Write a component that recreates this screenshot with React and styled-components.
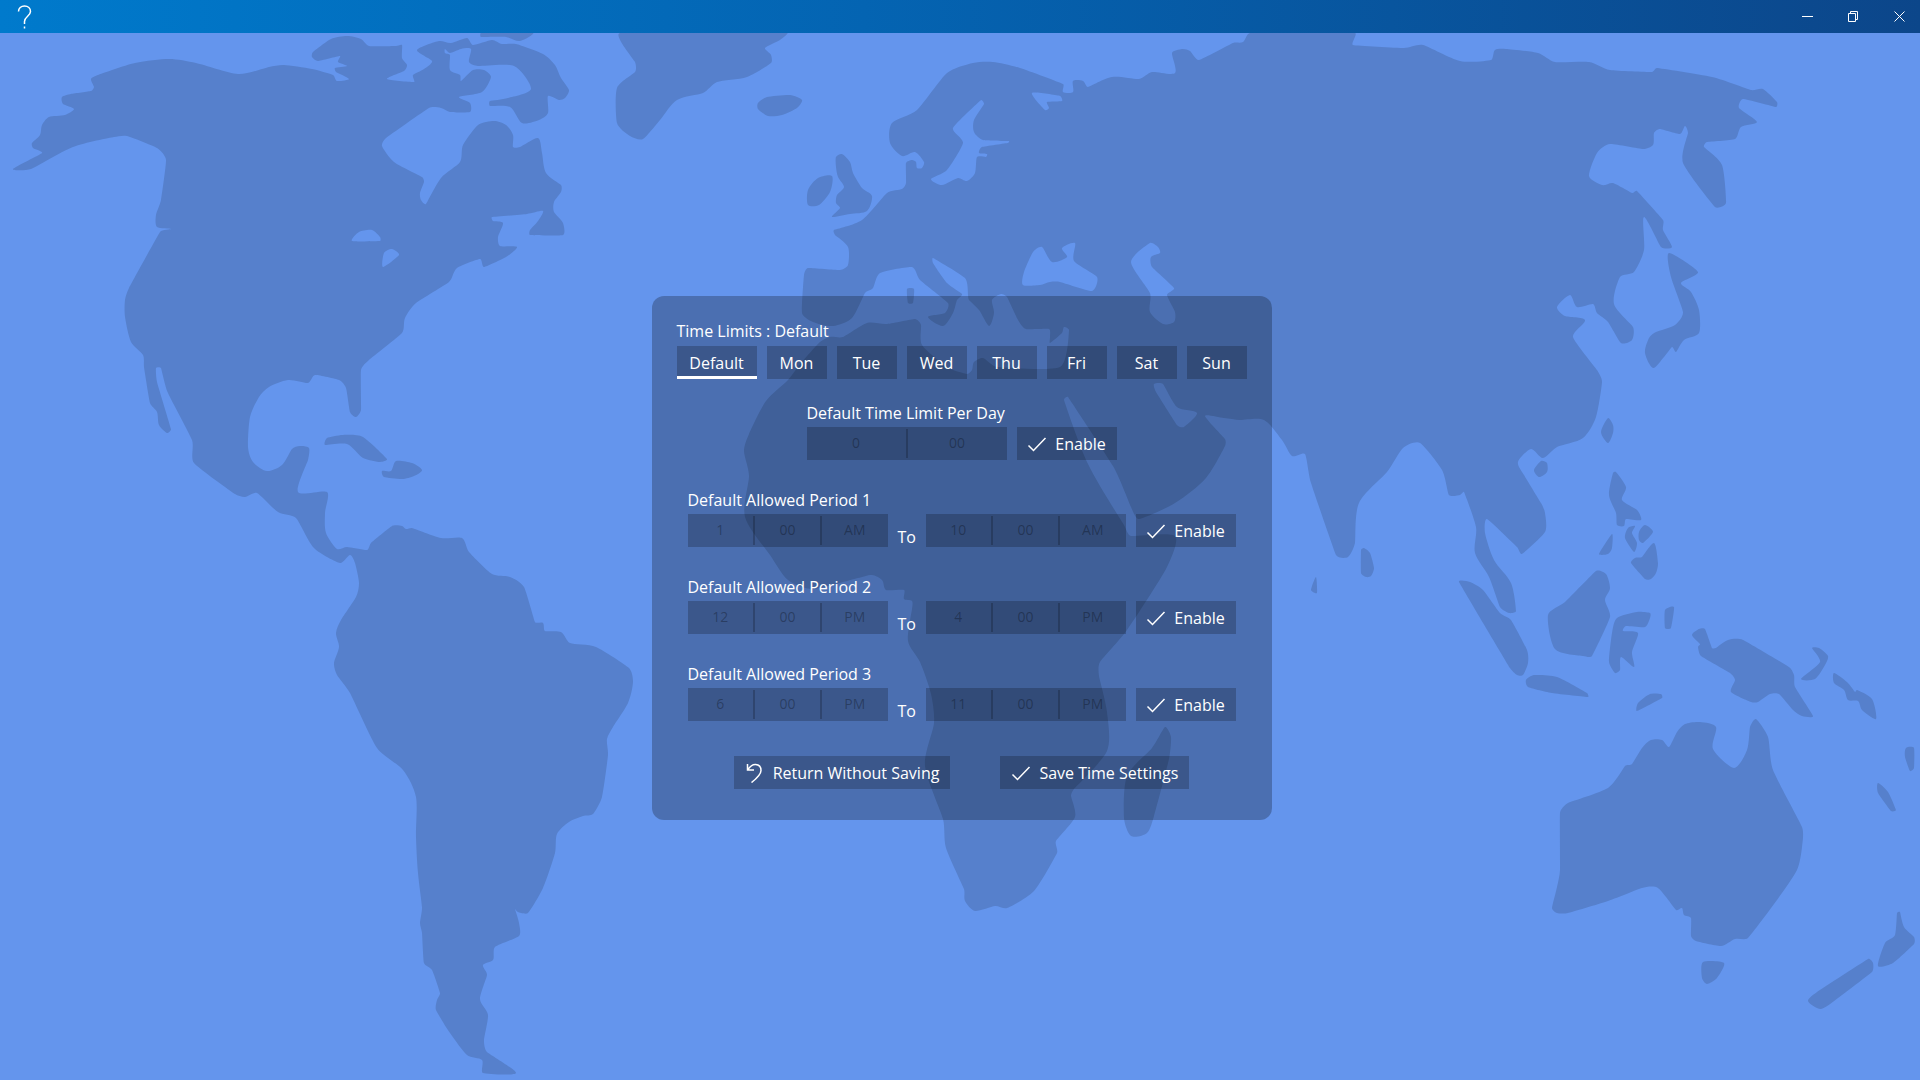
import React, { useState } from 'react';
import styled, { css, createGlobalStyle } from 'styled-components';

const GlobalStyle = createGlobalStyle`
  * {
    box-sizing: border-box;
  }
  body {
    margin: 0;
    background: #6495ed;
    color: #fff;
    font-family: "Open Sans", "Noto Sans", sans-serif;
    font-size: 16px;
    line-height: 24px;
  }
`

// Outlines of the world map, one "x,y x,y ..." list for each coast line.
const land = [
  // the Americas
  '13,169 42,153 33,148 32,143 40,135 42,125 49,117 65,115 74,109 63,104 62,97 71,94 91,91 94,87 91,79 98,75 135,63 169,59 196,63 238,74 269,67 284,65 312,69 333,75 337,81 349,79 336,72 335,68 347,66 338,62 340,56 318,61 312,57 313,52 331,39 347,36 361,39 369,46 396,46 402,45 402,58 407,65 404,71 387,79 414,82 413,75 424,69 432,61 417,50 439,41 451,43 467,38 473,45 492,40 502,44 516,44 543,54 555,65 561,78 569,90 565,98 559,100 548,96 548,113 539,120 522,123 510,107 490,106 490,101 508,98 531,89 514,66 478,66 469,62 471,49 461,49 450,53 445,49 445,53 450,55 450,70 460,75 461,81 473,70 484,70 491,77 482,92 459,97 470,103 470,112 450,112 441,108 429,108 386,138 382,146 394,162 422,177 424,182 420,193 421,200 426,204 441,178 460,162 463,145 478,125 494,121 506,125 513,135 513,147 520,147 538,138 542,153 546,173 561,185 561,192 554,202 554,212 563,223 563,235 530,235 530,230 538,221 543,211 527,214 492,217 493,221 503,223 498,237 500,246 517,247 506,257 484,267 480,259 457,268 449,282 416,303 405,318 402,333 369,360 361,370 361,410 356,417 350,412 346,388 339,380 315,375 308,383 288,380 269,387 259,397 250,417 248,447 253,462 267,471 282,465 292,449 300,446 309,448 308,460 298,492 327,492 325,513 326,533 337,549 347,547 367,550 371,543 392,526 402,526 406,529 412,528 441,538 462,538 469,552 492,574 510,577 524,587 535,622 543,623 545,631 561,632 570,643 596,647 629,668 633,682 628,703 613,727 607,739 608,755 602,797 593,814 583,816 569,822 557,834 555,853 543,888 528,913 518,912 515,909 519,923 519,936 495,947 493,960 483,965 487,975 480,999 488,1015 484,1040 487,1052 516,1073 483,1073 482,1060 467,1055 450,1033 436,1010 437,1000 440,993 432,970 424,963 422,933 420,923 422,907 418,873 416,837 416,797 403,770 377,748 350,693 337,675 334,663 339,647 336,633 341,620 356,597 359,583 355,563 350,555 340,563 314,548 296,518 278,512 257,493 245,497 235,494 194,463 192,440 168,393 161,368 156,368 157,382 171,429 167,433 159,425 157,412 150,403 144,367 143,355 131,342 125,317 125,300 129,288 160,232 171,229 157,227 156,215 161,200 166,160 157,148 127,136 114,137 73,147 31,169',
  '481,33 481,37 506,37 520,41 533,33',
  '325,445 327,438 343,435 363,437 387,459 380,462 363,458 347,444',
  '382,471 391,471 396,461 412,463 422,470 414,476 402,479 384,477',
  // Greenland, Iceland, British Isles
  '620,33 635,62 635,72 617,88 617,123 630,136 643,139 660,120 677,100 703,93 717,82 747,77 771,63 771,55 765,48 780,40 787,33',
  '758,103 767,97 790,95 802,100 797,108 782,115 768,116 758,109',
  '842,154 850,162 853,173 862,188 872,196 867,211 850,214 832,217 840,208 836,203 837,195 844,187 838,177 836,167 836,157',
  '808,205 808,190 818,178 832,176 830,192 819,205',
  // Eurasia and Africa
  '834,230 862,220 887,193 902,189 906,183 906,163 912,160 916,162 917,168 922,168 924,162 915,152 902,156 890,143 892,123 917,110 947,73 973,63 993,62 1020,68 1063,84 1063,92 1073,92 1073,81 1083,81 1088,87 1112,77 1139,79 1152,72 1175,73 1172,53 1182,49 1190,51 1199,60 1233,43 1243,42 1250,33 1355,33 1353,45 1404,48 1423,45 1460,61 1491,60 1495,50 1506,49 1538,53 1555,62 1589,62 1610,70 1652,72 1657,68 1712,77 1751,90 1763,89 1777,102 1776,107 1743,99 1739,108 1757,122 1741,127 1735,139 1707,142 1704,147 1722,165 1726,203 1715,207 1683,163 1688,133 1685,126 1680,134 1660,129 1654,133 1653,145 1643,149 1610,144 1597,153 1589,176 1602,185 1613,183 1632,193 1637,191 1663,220 1663,230 1672,247 1661,247 1644,217 1644,250 1634,272 1620,277 1614,304 1633,327 1632,340 1621,343 1608,322 1597,313 1593,304 1577,307 1570,295 1557,307 1565,316 1585,320 1573,337 1597,370 1602,382 1596,417 1583,438 1557,447 1543,458 1531,449 1518,462 1524,475 1541,503 1545,513 1545,532 1522,554 1517,547 1487,519 1485,533 1494,560 1511,583 1516,611 1509,613 1500,607 1489,577 1475,553 1476,527 1464,492 1460,495 1449,495 1442,470 1420,443 1403,448 1387,472 1359,503 1355,543 1348,557 1336,555 1311,483 1305,454 1292,456 1282,440 1264,420 1240,420 1224,418 1205,416 1225,439 1225,446 1206,478 1175,503 1139,519 1131,507 1113,466 1068,397 1064,400 1088,464 1124,525 1131,536 1175,536 1166,569 1127,630 1100,662 1099,676 1107,712 1107,751 1074,789 1071,796 1075,817 1056,841 1057,853 1034,891 1007,908 995,906 975,911 965,901 964,889 946,848 943,819 925,766 934,723 931,694 920,662 908,641 912,609 912,601 904,599 904,590 886,590 882,580 872,575 858,578 813,589 788,580 770,555 745,517 749,476 744,451 749,434 766,401 788,380 801,363 820,342 830,337 843,337 867,323 887,324 915,319 921,325 922,345 947,367 967,374 972,370 974,362 983,358 997,367 1060,367 1069,330 1064,327 1062,333 1050,343 1050,337 1049,329 1026,329 1018,320 1007,297 1001,294 992,300 994,313 989,326 979,310 969,300 968,295 965,278 933,258 933,263 947,283 962,294 957,300 953,313 943,326 928,317 945,313 948,303 920,280 912,267 880,273 873,288 865,293 852,318 833,326 813,322 802,313 804,275 808,268 840,270 848,265 848,247 835,235',
  '907,289 914,289 913,303 908,303',
  '1165,727 1171,737 1169,759 1154,816 1147,833 1131,836 1124,818 1127,776 1152,748',
  // Japan, Taiwan, Hainan, Philippines
  '1669,253 1698,272 1681,283 1691,292 1699,310 1699,333 1684,340 1676,352 1672,347 1664,357 1653,368 1645,353 1649,338 1656,332 1675,325 1683,312 1671,277',
  '1608,418 1613,425 1613,433 1608,443 1601,432',
  '1541,461 1547,463 1547,472 1539,477 1534,470',
  '1616,472 1626,487 1622,500 1637,510 1641,520 1626,519 1624,526 1617,525 1616,513 1609,495 1613,473',
  '1635,526 1632,533 1637,543 1634,552 1625,538 1628,528',
  '1645,525 1653,532 1643,543 1639,540 1639,532',
  '1654,543 1658,563 1656,573 1651,579 1645,579 1631,563 1635,558 1642,557',
  '1612,534 1612,548 1608,554 1599,554',
  // Sri Lanka, Maldives, Indonesia
  '1364,548 1370,553 1374,568 1371,576 1366,577 1361,573 1361,550',
  '1316,577 1317,593 1311,590',
  '1459,582 1470,582 1483,590 1500,613 1511,620 1527,650 1528,663 1523,675 1517,675 1510,668',
  '1526,680 1534,675 1557,677 1587,693 1588,697 1552,693 1528,687',
  '1596,571 1606,574 1610,588 1605,600 1610,617 1592,656 1583,656 1555,649 1548,615 1565,602',
  '1650,613 1650,618 1645,627 1626,626 1623,631 1638,633 1632,652 1634,667 1621,657 1620,670 1615,673 1609,662 1612,633 1617,618 1637,612',
  '1674,607 1671,628 1665,628 1665,610',
  '1637,711 1638,703 1650,694 1661,694 1662,698',
  // New Guinea, Oceania
  '1692,635 1699,629 1705,629 1712,648 1716,648 1728,640 1743,640 1789,667 1794,675 1795,687 1813,716 1802,716 1793,710 1779,694 1770,694 1758,702 1751,702 1731,692 1735,680 1730,673 1701,656 1698,647 1700,644',
  '1812,648 1819,648 1828,656 1825,665 1815,679 1801,679 1820,662',
  '1834,673 1847,682 1855,692 1857,690 1872,699 1876,719 1862,710 1858,701 1848,700 1844,690 1834,683',
  '1906,748 1914,748 1914,768 1910,771 1905,757',
  '1878,783 1888,792 1896,810 1891,811 1878,793',
  '1560,813 1568,803 1608,788 1625,766 1632,764 1642,748 1651,740 1662,740 1669,747 1677,732 1685,724 1700,722 1716,727 1713,749 1734,768 1747,750 1750,727 1756,719 1768,737 1773,770 1802,827 1802,847 1797,870 1777,900 1748,938 1735,939 1721,946 1696,941 1691,936 1691,918 1684,915 1682,908 1676,910 1658,888 1642,888 1608,901 1568,913 1557,913 1552,908 1557,887 1560,870',
  '1703,962 1724,963 1717,978 1707,984 1702,978',
  '1897,913 1900,912 1904,927 1914,937 1914,944 1893,963 1878,966 1885,943 1895,935',
  '1868,959 1873,963 1872,972 1838,998 1821,1009 1808,1001 1817,992',
];

// Lakes and inner seas, cut out of the land by the even-odd rule.
const water = [
  '352,241 359,232 372,230 380,237 380,241',
  '383,267 384,253 392,249 399,255',
  '981,100 984,104 974,120 974,132 983,140 1009,141 1008,143 982,147 979,153 987,154 986,157 977,157 975,173 967,181 958,178 942,185 931,179 947,170 963,143 953,128',
  '1032,93 1060,96 1062,101 1047,102 1049,108 1045,110',
  '1023,285 1024,272 1033,252 1042,247 1052,262 1067,257 1062,248 1075,243 1074,261 1097,277 1092,291 1060,282 1050,282 1040,285',
  '1150,243 1158,247 1160,253 1151,257 1152,267 1174,288 1167,295 1175,312 1174,322 1163,324 1150,312 1150,293 1131,262',
  '1154,384 1163,384 1177,407 1197,413 1184,427 1177,425 1156,392',
];

// Closed curve through every point; the sharper the turn, the shorter its handles.
const toPath = (outline) => {
  const points = outline.split(' ').map(pair => pair.split(',').map(Number));
  const count = points.length;
  const at = (i) => points[(i + count) % count];
  const distance = (a, b) => Math.hypot(a[0] - b[0], a[1] - b[1]);
  const handle = (i, sign) => {
    const [prev, here, next] = [at(i - 1), at(i), at(i + 1)];
    const before = distance(prev, here);
    const after = distance(here, next);
    const reach = 0.3 * Math.min(before, after) / (before + after);
    return [0, 1].map(k => (here[k] + sign * reach * (next[k] - prev[k])).toFixed(1));
  };
  return `M${at(0)}` + points.map((_, i) => `C${handle(i, 1)} ${handle(i + 1, -1)} ${at(i + 1)}`).join('') + 'Z';
}

const worldPath = [...land, ...water].map(toPath).join('');

const days = ['Default', 'Mon', 'Tue', 'Wed', 'Thu', 'Fri', 'Sat', 'Sun'];

const periods = [
  { id: 1, from: ['1', '00', 'AM'], to: ['10', '00', 'AM'] },
  { id: 2, from: ['12', '00', 'PM'], to: ['4', '00', 'PM'] },
  { id: 3, from: ['6', '00', 'PM'], to: ['11', '00', 'PM'] },
];

const CheckIcon = () => (
  <Icon viewBox="0 0 20 20" aria-hidden="true">
    <path d="M1.5 11.5 6.5 16.5 18.5 4" />
  </Icon>
)

const UndoIcon = () => (
  <Icon viewBox="0 0 20 20" aria-hidden="true">
    <path d="M2.5 1V7H9M2.8 6.6C5 3.2 7.6 1.2 10.6 1.4C14 1.6 16 4.2 16 7.4C16 11.5 11.5 15.5 6.5 19.5" />
  </Icon>
)

const TimePicker = ({ label, parts }) => (
  <Picker type="button" disabled aria-label={`${label} ${parts.join(' ')}`}>
    {parts.map((part, i) => <Part key={i}>{part}</Part>)}
  </Picker>
)

const EnableButton = () => {
  const [on, setOn] = useState(false);
  return (
    <Button $enable type="button" aria-pressed={on} onClick={() => setOn(!on)}>
      <CheckIcon />
      Enable
    </Button>
  );
}

const App = () => {
  const [day, setDay] = useState('Default');

  return (
    <Page>
      <GlobalStyle />
      <TitleBar>
        <BarButton type="button" aria-label="Help">
          <HelpIcon viewBox="0 0 16 24" aria-hidden="true">
            <path d="M1.5 6.5C1.5 3.2 4 1 7.5 1C11 1 13.5 3.2 13.5 6.5C13.5 11 7.5 11.5 7.5 16.5V19" />
            <path d="M7.5 21.5V23.5" />
          </HelpIcon>
        </BarButton>
        <WindowButtons>
          <BarButton type="button" aria-label="Minimize">
            <WindowIcon viewBox="0 0 13 13" aria-hidden="true"><path d="M1 6.5H12" /></WindowIcon>
          </BarButton>
          <BarButton type="button" aria-label="Restore">
            <WindowIcon viewBox="0 0 13 13" aria-hidden="true">
              <path d="M1.5 3.5H8.5V11.5H1.5ZM3.5 3.5V1.5H10.5V9.5H8.5" />
            </WindowIcon>
          </BarButton>
          <BarButton type="button" aria-label="Close">
            <WindowIcon viewBox="0 0 13 13" aria-hidden="true"><path d="M1.500 1.500 11.500 11.500M11.500 1.500 1.500 11.500" /></WindowIcon>
          </BarButton>
        </WindowButtons>
      </TitleBar>
      <Main>
        <World viewBox="0 33 1920 1047" preserveAspectRatio="xMidYMid slice" aria-hidden="true">
          <path d={worldPath} fillRule="evenodd" />
        </World>
        <Panel>
          <Title>Time Limits : {day}</Title>
          <Tabs>
            {days.map(name => (
              <Tab
                key={name}
                type="button"
                $wide={name === 'Default'}
                $active={name === day}
                aria-pressed={name === day}
                onClick={() => setDay(name)}
              >
                {name}
              </Tab>
            ))}
          </Tabs>
          <Group role="group" aria-labelledby="limit">
            <Label id="limit">{day} Time Limit Per Day</Label>
            <Row>
              <TimePicker label="Time limit" parts={['0', '00']} />
              <EnableButton />
            </Row>
          </Group>
          {periods.map(({ id, from, to }) => (
            <Group key={id} role="group" aria-labelledby={`period-${id}`}>
              <Label id={`period-${id}`}>{day} Allowed Period {id}</Label>
              <Row>
                <TimePicker label="From" parts={from} />
                <To>To</To>
                <TimePicker label="To" parts={to} />
                <EnableButton />
              </Row>
            </Group>
          ))}
          <Actions>
            <Button type="button">
              <UndoIcon />
              Return Without Saving
            </Button>
            <Button type="button">
              <CheckIcon />
              Save Time Settings
            </Button>
          </Actions>
        </Panel>
      </Main>
    </Page>
  );
}

const Page = styled.div`
  display: flex;
  flex-direction: column;
  min-height: 100vh;
`
const TitleBar = styled.header`
  display: flex;
  justify-content: space-between;
  height: 33px;
  padding-left: 4px;
  background: linear-gradient(to right, #007acc, #0464b2 45%, #0c468a);
`
const WindowButtons = styled.div`
  display: flex;
  gap: 5px;
`
const BarButton = styled.button`
  display: flex;
  align-items: center;
  justify-content: center;
  width: 41px;
  padding: 0;
  background: none;
  border: none;
  color: white;
  &:hover {
    background: rgba(255, 255, 255, 0.15);
  }
`
const HelpIcon = styled.svg`
  width: 16px;
  height: 24px;
  fill: none;
  stroke: white;
  stroke-width: 1.5;
`
const WindowIcon = styled.svg`
  width: 13px;
  height: 13px;
  fill: none;
  stroke: white;
  stroke-width: 1;
`
const Main = styled.main`
  position: relative;
  display: flex;
  flex: 1;
  align-items: center;
  justify-content: center;
  padding: 3px 0 0 3px;
`
const World = styled.svg`
  position: absolute;
  inset: 0;
  width: 100%;
  height: 100%;
  fill: #5680cc;
`
const Panel = styled.section`
  position: relative;
  display: flex;
  flex-direction: column;
  align-items: center;
  padding: 23px 25px 31px;
  background: rgba(0, 0, 0, 0.25);
  border-radius: 12px;
`
const Title = styled.h1`
  align-self: flex-start;
  margin: 0 0 3px;
  font-size: 16px;
  font-weight: normal;
  line-height: 24px;
`
const Tabs = styled.nav`
  display: flex;
  gap: 10px;
  margin-bottom: 22px;
`
const flat = css`
  height: 33px;
  border: none;
  background: rgba(0, 0, 0, 0.21);
  color: white;
  font: inherit;
`
const Tab = styled.button`
  ${flat}
  width: ${props => props.$wide ? '80px' : '60px'};
  padding: 0;

  ${props => props.$active && css`
  box-shadow: inset 0 -3px white;
`}
`
const Group = styled.div`
  margin-bottom: 28px;
`
const Label = styled.div`
  margin-bottom: 2px;
`
const Row = styled.div`
  display: flex;
  align-items: flex-end;
  gap: 10px;
`
const To = styled.span`
  width: 18px;
  line-height: 20px;
`
const Picker = styled.button`
  ${flat}
  display: flex;
  align-items: center;
  width: 200px;
  padding: 2px 0;
  color: rgba(0, 0, 0, 0.3);
  font-size: 14px;
`
const Part = styled.span`
  flex: 1;
  height: 29px;
  line-height: 28px;
  text-align: center;

  & + & {
    border-left: 2px solid rgba(0, 0, 0, 0.2);
  }
`
const Button = styled.button`
  ${flat}
  display: flex;
  align-items: center;
  justify-content: center;
  gap: 8px;
  padding: 0 11px;
  white-space: nowrap;

  ${props => props.$enable && css`
  width: 100px;
`}
`
const Icon = styled.svg`
  flex: none;
  width: 20px;
  height: 20px;
  fill: none;
  stroke: white;
  stroke-width: 1.5;
`
const Actions = styled.div`
  display: flex;
  gap: 50px;
  margin-top: 7px;
`
export default App;
